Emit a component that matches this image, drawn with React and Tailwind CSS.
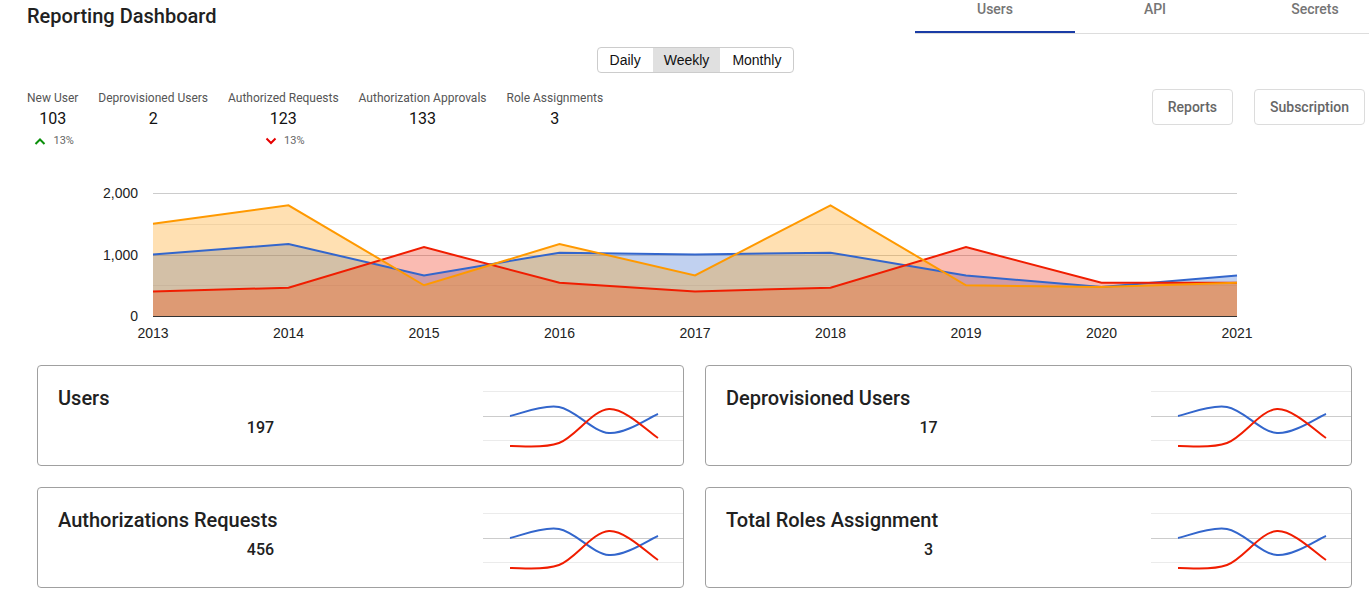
import React from 'react';

const years = [2013, 2014, 2015, 2016, 2017, 2018, 2019, 2020, 2021];

const series = [
  { color: '#3366cc', data: [1000, 1170, 660, 1030, 1000, 1030, 660, 470, 660] },
  { color: '#f01d00', data: [400, 460, 1120, 540, 400, 460, 1120, 540, 540] },
  { color: '#ff9900', data: [1500, 1800, 500, 1170, 660, 1800, 500, 470, 540] },
];

const stats = [
  { label: 'New User', value: '103', trend: 'up' },
  { label: 'Deprovisioned Users', value: '2' },
  { label: 'Authorized Requests', value: '123', trend: 'down' },
  { label: 'Authorization Approvals', value: '133' },
  { label: 'Role Assignments', value: '3' },
];

const cards = [
  { title: 'Users', value: '197' },
  { title: 'Deprovisioned Users', value: '17' },
  { title: 'Authorizations Requests', value: '456' },
  { title: 'Total Roles Assignment', value: '3' },
];

// chart geometry, in page pixels
const X0 = 153;
const STEP = 135.5;
const BASE = 316;
const SCALE = 123 / 2000;
const px = (i) => X0 + i * STEP;
const py = (v) => BASE - v * SCALE;

// catmull-rom to bezier, for the small curved lines
const smooth = (pts) => {
  let d = `M${pts[0][0]} ${pts[0][1]}`;
  for (let i = 0; i < pts.length - 1; i++) {
    const p0 = pts[i - 1] || pts[i];
    const p1 = pts[i];
    const p2 = pts[i + 1];
    const p3 = pts[i + 2] || p2;
    const c1 = [p1[0] + (p2[0] - p0[0]) / 6, p1[1] + (p2[1] - p0[1]) / 6];
    const c2 = [p2[0] - (p3[0] - p1[0]) / 6, p2[1] - (p3[1] - p1[1]) / 6];
    d += ` C${c1[0]} ${c1[1]} ${c2[0]} ${c2[1]} ${p2[0]} ${p2[1]}`;
  }
  return d;
};

const sparkX = [27, 76, 126, 175];
const sparkBlue = [50, 41, 67, 48];
const sparkRed = [80, 77, 43, 72];

const Sparkline = () => (
  <svg width="200" height="99" className="block shrink-0">
    <line x1="0" x2="200" y1="25.5" y2="25.5" stroke="#ebebeb" />
    <line x1="0" x2="200" y1="50.5" y2="50.5" stroke="#cccccc" />
    <line x1="0" x2="200" y1="74.5" y2="74.5" stroke="#ebebeb" />
    <path d={smooth(sparkX.map((x, i) => [x, sparkBlue[i]]))} fill="none" stroke="#3366cc" strokeWidth="2" />
    <path d={smooth(sparkX.map((x, i) => [x, sparkRed[i]]))} fill="none" stroke="#f01d00" strokeWidth="2" />
  </svg>
);

const Chevron = ({ up }) => (
  <svg width="12" height="8" viewBox="0 0 12 8">
    <path
      d={up ? 'M1.5 7 L6 2.5 L10.5 7' : 'M1.5 1.5 L6 6 L10.5 1.5'}
      fill="none"
      stroke={up ? '#0a8f0a' : '#e60000'}
      strokeWidth="2"
    />
  </svg>
);

const AreaChart = () => (
  <svg width="1369" height="180" viewBox="0 170 1369 180" className="block" style={{ fontFamily: '"Liberation Sans", Arial, sans-serif' }}>
    <line x1={X0} x2={px(8)} y1="193.5" y2="193.5" stroke="#cccccc" />
    <line x1={X0} x2={px(8)} y1="224.5" y2="224.5" stroke="#ebebeb" />
    <line x1={X0} x2={px(8)} y1="255.5" y2="255.5" stroke="#cccccc" />
    <line x1={X0} x2={px(8)} y1="285.5" y2="285.5" stroke="#ebebeb" />
    {series.map((s) => {
      const pts = s.data.map((v, i) => `${px(i)},${py(v)}`).join(' ');
      return (
        <polygon key={s.color} points={`${X0},${BASE} ${pts} ${px(8)},${BASE}`} fill={s.color} fillOpacity="0.3" />
      );
    })}
    {series.map((s) => (
      <polyline
        key={s.color}
        points={s.data.map((v, i) => `${px(i)},${py(v)}`).join(' ')}
        fill="none"
        stroke={s.color}
        strokeWidth="2"
      />
    ))}
    <line x1={X0} x2={px(8)} y1="316.5" y2="316.5" stroke="#333333" />
    <text x="138" y="198" textAnchor="end" fontSize="14" fill="#222">2,000</text>
    <text x="138" y="260" textAnchor="end" fontSize="14" fill="#222">1,000</text>
    <text x="138" y="321" textAnchor="end" fontSize="14" fill="#222">0</text>
    {years.map((y, i) => (
      <text key={y} x={px(i)} y="338" textAnchor="middle" fontSize="14" fill="#222">{y}</text>
    ))}
  </svg>
);

export default function App() {
  return (
    <div className="w-[1369px] h-[600px] overflow-hidden bg-white text-[#212121]" style={{ fontFamily: 'Roboto, "Noto Sans", sans-serif' }}>
      <header className="flex h-[34px] justify-between">
        <h1 className="pl-[27px] pt-[4px] text-[20px] font-medium leading-6 text-[#212121]">Reporting Dashboard</h1>
        <nav className="flex w-[454px] overflow-hidden border-b border-[#dddddd]">
          <div className="h-[33px] w-[160px] shrink-0 border-b-2 border-[#1a3ca6] text-center text-[14px] font-medium leading-[18px] text-[#757575]">Users</div>
          <div className="h-[33px] w-[160px] shrink-0 text-center text-[14px] font-medium leading-[18px] text-[#757575]">API</div>
          <div className="h-[33px] w-[160px] shrink-0 text-center text-[14px] font-medium leading-[18px] text-[#757575]">Secrets</div>
        </nav>
      </header>

      <div className="mt-[13px] flex justify-center pl-[22px]">
        <div className="flex h-[26px] overflow-hidden rounded-[4px] border border-[#cccccc] text-[14px] text-[#111]" style={{ fontFamily: '"Liberation Sans", Arial, sans-serif' }}>
          <button className="px-[12px] leading-[25px]">Daily</button>
          <button className="bg-[#e0e0e0] px-[11px] leading-[25px]">Weekly</button>
          <button className="px-[12px] leading-[25px]">Monthly</button>
        </div>
      </div>

      <div className="mt-[16px] flex justify-between">
        <div className="flex gap-5 pl-[27px] pt-[2px]">
          {stats.map((s) => (
            <div key={s.label} className="flex flex-col items-center">
              <div className="text-[12px] leading-[14px] text-[#555555]">{s.label}</div>
              <div className="mt-[4px] text-[16px] leading-5 text-[#111111]">{s.value}</div>
              {s.trend && (
                <div className="mt-[5px] flex items-center gap-[7px] pl-[3px] text-[11px] leading-[14px] text-[#666666]">
                  <Chevron up={s.trend === 'up'} />
                  <span>13%</span>
                </div>
              )}
            </div>
          ))}
        </div>
        <div className="flex gap-[21px] pr-[4px]">
          <button className="h-[36px] rounded-[4px] border border-[#dcdcdc] px-[15px] text-[14px] font-medium text-[#666666]">Reports</button>
          <button className="h-[36px] rounded-[4px] border border-[#dcdcdc] px-[15px] text-[14px] font-medium text-[#666666]">Subscription</button>
        </div>
      </div>

      <div className="mt-[22px]">
        <AreaChart />
      </div>

      <div className="mt-[15px] grid grid-cols-[647px_647px] gap-[21px] pl-[37px]">
        {cards.map((c) => (
          <div key={c.title} className="flex h-[101px] overflow-hidden rounded-[4px] border border-[#a0a0a0]">
            <div className="flex-1 pt-[20px]">
              <div className="pl-[20px] text-[20px] font-medium leading-6 text-[#212121]">{c.title}</div>
              <div className="mt-[8px] text-center text-[16px] font-medium leading-5 text-[#212121]">{c.value}</div>
            </div>
            <Sparkline />
          </div>
        ))}
      </div>
    </div>
  );
}
